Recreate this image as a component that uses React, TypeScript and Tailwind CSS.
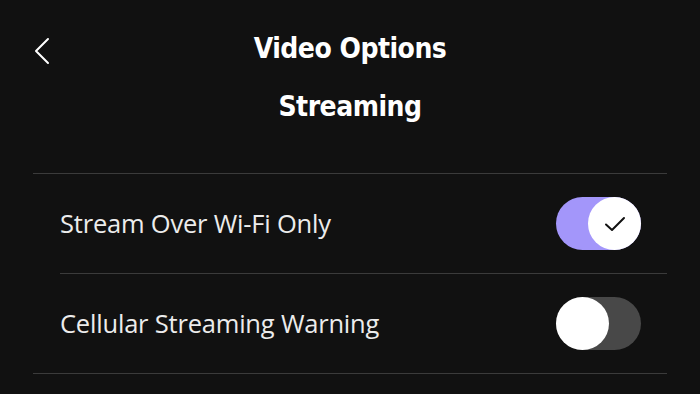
import React, { useState } from "react";

function Toggle({ on, onChange }: { on: boolean; onChange: () => void }) {
  return (
    <button
      onClick={onChange}
      className={`relative flex h-[53px] w-[85px] items-center rounded-full ${
        on ? "bg-[#a396fa]" : "bg-[#484848]"
      }`}
    >
      <span
        className={`absolute top-0 flex h-[53px] w-[53px] items-center justify-center rounded-full bg-white ${
          on ? "left-[32px]" : "left-0"
        }`}
      >
        {on && (
          <svg width="22" height="16" viewBox="0 0 22 16" fill="none">
            <path
              d="M2 8.5L8 14L20 2"
              stroke="#111"
              strokeWidth="2"
              strokeLinecap="round"
              strokeLinejoin="round"
            />
          </svg>
        )}
      </span>
    </button>
  );
}

export default function App() {
  const [wifiOnly, setWifiOnly] = useState(true);
  const [cellWarn, setCellWarn] = useState(false);

  const rows = [
    { label: "Stream Over Wi-Fi Only", on: wifiOnly, toggle: () => setWifiOnly(!wifiOnly) },
    { label: "Cellular Streaming Warning", on: cellWarn, toggle: () => setCellWarn(!cellWarn) },
  ];

  const title = { fontFamily: '"Liberation Sans Narrow", "DejaVu Sans Condensed", Roboto, sans-serif' };

  return (
    <div className="h-[394px] w-[700px] overflow-hidden bg-[#111111] text-white">
      {/* Header */}
      <div className="relative flex h-[100px] items-center justify-center">
        <button className="absolute left-[34px] top-[37px]">
          <svg width="16" height="28" viewBox="0 0 16 28" fill="none">
            <path d="M14 2L2 14L14 26" stroke="#fff" strokeWidth="2" strokeLinecap="round" strokeLinejoin="round" />
          </svg>
        </button>
        <h1 className="mt-[-2px] text-[28px] font-bold tracking-[-0.5px]" style={title}>
          Video Options
        </h1>
      </div>
      <h2 className="mt-[-14px] text-center text-[28px] font-bold tracking-[-0.5px]" style={title}>
        Streaming
      </h2>

      {/* List */}
      <div className="mx-[33px] mt-[45px] border-t border-[#3b3b3b]">
        {rows.map((r, i) => (
          <div
            key={r.label}
            className={`flex h-[100px] items-center justify-between border-b border-[#3b3b3b] pr-[26px] ${
              i === 0 ? "ml-[27px]" : "pl-[27px]"
            }`}
          >
            <span
              className="text-[25.5px] font-normal tracking-[-0.2px] text-[#ececec]"
              style={{ fontFamily: '"Open Sans", "Noto Sans", sans-serif' }}
            >
              {r.label}
            </span>
            <Toggle on={r.on} onChange={r.toggle} />
          </div>
        ))}
      </div>
    </div>
  );
}
